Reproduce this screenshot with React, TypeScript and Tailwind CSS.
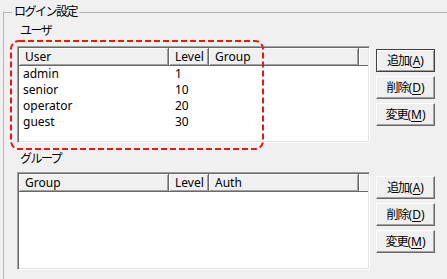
import React from 'react';

type Column = { name: string; width: number };

const userColumns: Column[] = [
  { name: 'User', width: 150 },
  { name: 'Level', width: 40 },
  { name: 'Group', width: 150 },
];

const groupColumns: Column[] = [
  { name: 'Group', width: 150 },
  { name: 'Level', width: 40 },
  { name: 'Auth', width: 150 },
];

const users = [
  { name: 'admin', level: '1' },
  { name: 'senior', level: '10' },
  { name: 'operator', level: '20' },
  { name: 'guest', level: '30' },
];

function HeaderCell({ name, width }: Column) {
  return (
    <div
      className="h-[18px] shrink-0 bg-[#f0f0f0] border-r border-b border-[#696969] shadow-[inset_1px_1px_0_#ffffff,inset_-1px_-1px_0_#a0a0a0] pl-[6px] leading-[17px] text-black"
      style={{ width }}
    >
      {name}
    </div>
  );
}

function ListView({ columns, height, rows }: { columns: Column[]; height: number; rows?: typeof users }) {
  return (
    <div
      className="w-[353px] shrink-0 bg-white border border-t-[#a0a0a0] border-l-[#a0a0a0] border-r-[#ffffff] border-b-[#ffffff] p-[1px] shadow-[inset_1px_1px_0_#696969,inset_-1px_-1px_0_#e3e3e3]"
      style={{ height }}
    >
      <div className="flex">
        {columns.map((c) => (
          <HeaderCell key={c.name} {...c} />
        ))}
        <div className="h-[18px] flex-1 bg-[#f0f0f0] border-b border-[#696969] shadow-[inset_1px_1px_0_#ffffff]" />
      </div>
      {rows?.map((r) => (
        <div key={r.name} className="flex h-[16px] leading-[16px] text-black">
          <div className="w-[150px] pl-[4px]">{r.name}</div>
          <div className="w-[40px] pl-[6px]">{r.level}</div>
        </div>
      ))}
    </div>
  );
}

function Button({ label, hotkey, isDefault }: { label: string; hotkey: string; isDefault?: boolean }) {
  return (
    <div
      className={`w-[59px] h-[23px] flex items-center justify-center bg-[#f0f0f0] border ${
        isDefault
          ? 'border-[#404040] shadow-[inset_1px_1px_0_#ffffff,inset_-1px_-1px_0_#a0a0a0]'
          : 'border-t-[#ffffff] border-l-[#ffffff] border-r-[#696969] border-b-[#696969] shadow-[inset_-1px_-1px_0_#a0a0a0]'
      } text-black leading-[14px]`}
    >
      <span className="tracking-[-1px]">{label}</span>(<span className="underline underline-offset-2">{hotkey}</span>)
    </div>
  );
}

function ButtonColumn({ first }: { first?: boolean }) {
  return (
    <div className={`ml-[6px] flex flex-col gap-[4px] ${first ? 'mt-[3px]' : 'mt-[4px]'}`}>
      <Button label="追加" hotkey="A" isDefault={first} />
      <Button label="削除" hotkey="D" />
      <Button label="変更" hotkey="M" />
    </div>
  );
}

export default function App() {
  return (
    <div className="relative w-[447px] h-[279px] overflow-hidden bg-[#f0f0f0] text-[12px] font-['Noto_Sans','Noto_Sans_CJK_JP',sans-serif]">
      <fieldset className="ml-[3px] mt-[5px] w-[480px] h-[320px] border border-[#b4b4b4] pl-[13px]">
        <legend className="-ml-[5px] px-[2px] leading-[14px] tracking-[-1.5px] text-black">ログイン設定</legend>

        <div className="mt-[5px] ml-[3px] leading-[14px] tracking-[-1.5px] text-black">ユーザ</div>
        <div className="mt-[8px] flex items-start">
          <ListView columns={userColumns} height={97} rows={users} />
          <ButtonColumn first />
        </div>

        <div className="mt-[9px] ml-[3px] leading-[14px] tracking-[-1.5px] text-black">グループ</div>
        <div className="mt-[6px] flex items-start">
          <ListView columns={groupColumns} height={98} />
          <ButtonColumn />
        </div>
      </fieldset>

      {/* highlight around the user list */}
      <svg className="absolute left-[9px] top-[39px] pointer-events-none" width="256" height="112" viewBox="0 0 256 112">
        <rect x="2" y="2" width="252" height="108" rx="8" fill="none" stroke="#f01414" strokeWidth="2" strokeDasharray="6 3" />
      </svg>
    </div>
  );
}
